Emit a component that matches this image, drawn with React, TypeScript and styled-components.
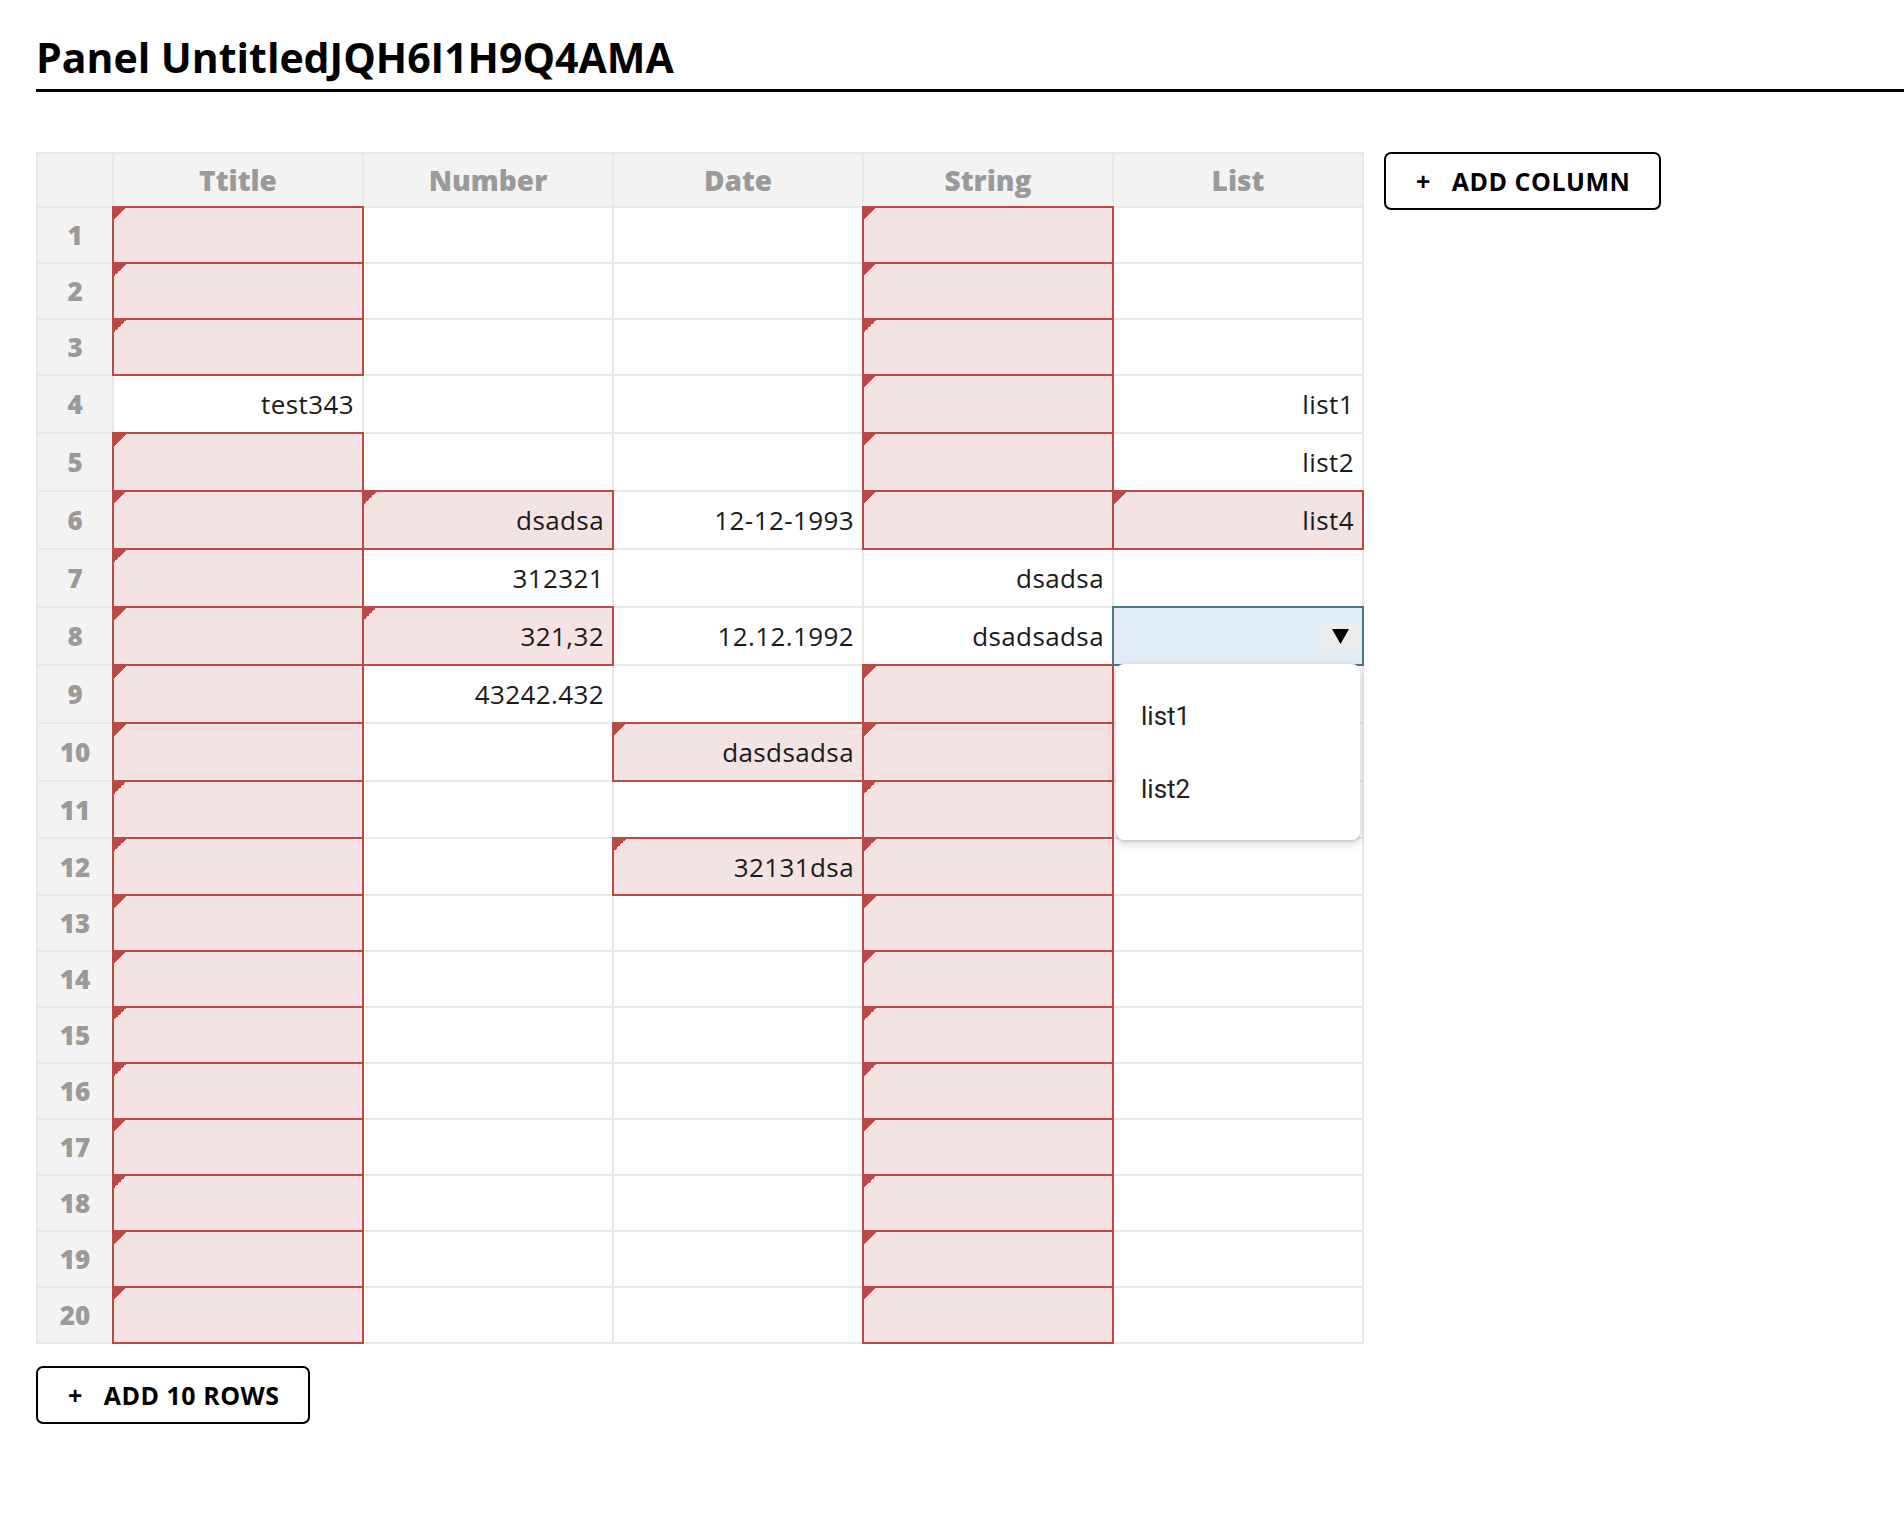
import React from "react";
import styled, { createGlobalStyle, css } from "styled-components";

const GlobalStyle = createGlobalStyle`
  html, body { margin: 0; padding: 0; background: #ffffff; }
  body { font-family: "Open Sans", "Liberation Sans", sans-serif; color: #111; }
  *, *::before, *::after { box-sizing: border-box; }
`;

const RED = "#b94a45";
const PINK = "#f4e3e3";
const LINE = "#e8e8e8";
const HEAD_BG = "#f3f3f3";

const Page = styled.div`
  padding: 29px 0 80px 36px;
`;

const Title = styled.h1`
  margin: 0;
  font-size: 41px;
  line-height: 56px;
  font-weight: 700;
  letter-spacing: 0;
  color: #000;
  padding-bottom: 4px;
  border-bottom: 3px solid #000;
`;

const Body = styled.div`
  margin-top: 60px;
  display: flex;
  align-items: flex-start;
  gap: 20px;
`;

const LeftColumn = styled.div`
  display: flex;
  flex-direction: column;
  align-items: flex-start;
  gap: 22px;
`;

const Sheet = styled.div`
  display: flex;
  flex-direction: column;
  border-top: 2px solid ${LINE};
  border-left: 2px solid ${LINE};
`;

const Row = styled.div<{ $h: number }>`
  display: flex;
  height: ${(p) => p.$h}px;
`;

const Corner = styled.div`
  width: 76px;
  height: 100%;
  background: ${HEAD_BG};
  border-right: 2px solid ${LINE};
  border-bottom: 2px solid ${LINE};
`;

const ColHead = styled.div`
  width: 250px;
  height: 100%;
  background: ${HEAD_BG};
  border-right: 2px solid ${LINE};
  border-bottom: 2px solid ${LINE};
  display: flex;
  align-items: center;
  justify-content: center;
  font-size: 28px;
  font-weight: 800;
  color: #9a9a9a;
`;

const RowHead = styled.div`
  width: 76px;
  height: 100%;
  background: ${HEAD_BG};
  border-right: 2px solid ${LINE};
  border-bottom: 2px solid ${LINE};
  display: flex;
  align-items: center;
  justify-content: center;
  font-size: 26px;
  font-weight: 800;
  color: #9a9a9a;
`;

const Cell = styled.div<{ $state?: "error" | "selected" }>`
  position: relative;
  width: 250px;
  height: 100%;
  border-right: 2px solid ${LINE};
  border-bottom: 2px solid ${LINE};
  display: flex;
  align-items: center;
  justify-content: flex-end;
  padding: 0 8px;
  font-size: 26px;
  letter-spacing: 0.4px;
  color: #1a1a1a;
  background: #fff;

  ${(p) =>
    p.$state === "error" &&
    css`
      background: ${PINK};
      &::before {
        content: "";
        position: absolute;
        top: 0;
        left: 0;
        width: 12px;
        height: 12px;
        background: linear-gradient(135deg, ${RED} 50%, transparent 50%);
      }
      &::after {
        content: "";
        position: absolute;
        inset: -2px;
        border: 2px solid ${RED};
        pointer-events: none;
        z-index: 1;
      }
    `}

  ${(p) =>
    p.$state === "selected" &&
    css`
      background: #e2ecf6;
      padding-right: 4px;
      &::after {
        content: "";
        position: absolute;
        inset: -2px;
        border: 2px solid #4b7782;
        pointer-events: none;
        z-index: 2;
      }
    `}
`;

const ArrowBox = styled.span`
  width: 36px;
  height: 26px;
  background: #ececec;
  display: flex;
  align-items: center;
  justify-content: center;
`;

const Menu = styled.div`
  position: absolute;
  top: 100%;
  left: 2px;
  width: 244px;
  background: #fff;
  border-radius: 8px;
  box-shadow: 0 4px 10px rgba(0, 0, 0, 0.16), 0 1px 3px rgba(0, 0, 0, 0.14);
  padding: 15px 0;
  z-index: 10;
`;

const MenuItem = styled.div`
  height: 73px;
  display: flex;
  align-items: center;
  padding-left: 25px;
  font-family: Roboto, "Noto Sans", sans-serif;
  font-size: 26px;
  letter-spacing: 0;
  color: #222;
`;

const ActionButton = styled.button`
  display: inline-flex;
  align-items: center;
  gap: 21px;
  height: 58px;
  padding: 0 29px 0 30px;
  border: 2px solid #000;
  border-radius: 7px;
  background: #fff;
  font-family: "Open Sans", "Liberation Sans", sans-serif;
  font-weight: 700;
  font-size: 25px;
  letter-spacing: 0.5px;
  color: #000;
  cursor: pointer;
`;

type CellData = { text?: string; error?: boolean; selected?: boolean };

const COLS = ["Ttitle", "Number", "Date", "String", "List"];
const E: CellData = { error: true };
const N: CellData = {};

const ROWS: CellData[][] = [
  [E, N, N, E, N],
  [E, N, N, E, N],
  [E, N, N, E, N],
  [{ text: "test343" }, N, N, E, { text: "list1" }],
  [E, N, N, E, { text: "list2" }],
  [E, { text: "dsadsa", error: true }, { text: "12-12-1993" }, E, { text: "list4", error: true }],
  [E, { text: "312321" }, N, { text: "dsadsa" }, N],
  [E, { text: "321,32", error: true }, { text: "12.12.1992" }, { text: "dsadsadsa" }, { selected: true }],
  [E, { text: "43242.432" }, N, E, N],
  [E, N, { text: "dasdsadsa", error: true }, E, N],
  [E, N, N, E, N],
  [E, N, { text: "32131dsa", error: true }, E, N],
  [E, N, N, E, N],
  [E, N, N, E, N],
  [E, N, N, E, N],
  [E, N, N, E, N],
  [E, N, N, E, N],
  [E, N, N, E, N],
  [E, N, N, E, N],
  [E, N, N, E, N],
];

const HEIGHTS = [56, 56, 56, 58, 58, 58, 58, 58, 58, 58, 57, 57, 56, 56, 56, 56, 56, 56, 56, 56];

const DownTriangle = () => (
  <svg width="17" height="15" viewBox="0 0 17 15">
    <polygon points="0,0 17,0 8.5,15" fill="#000" />
  </svg>
);

const Dropdown = () => (
  <>
    <ArrowBox>
      <DownTriangle />
    </ArrowBox>
    <Menu>
      <MenuItem>list1</MenuItem>
      <MenuItem>list2</MenuItem>
    </Menu>
  </>
);

export default function App() {
  return (
    <>
      <GlobalStyle />
      <Page>
        <Title>Panel UntitledJQH6I1H9Q4AMA</Title>
        <Body>
          <LeftColumn>
            <Sheet>
              <Row $h={54}>
                <Corner />
                {COLS.map((c) => (
                  <ColHead key={c}>{c}</ColHead>
                ))}
              </Row>
              {ROWS.map((row, i) => (
                <Row key={i} $h={HEIGHTS[i]}>
                  <RowHead>{i + 1}</RowHead>
                  {row.map((cell, j) => (
                    <Cell
                      key={j}
                      $state={cell.selected ? "selected" : cell.error ? "error" : undefined}
                    >
                      {cell.selected ? <Dropdown /> : cell.text}
                    </Cell>
                  ))}
                </Row>
              ))}
            </Sheet>
            <ActionButton>
              <span>+</span>
              <span>ADD 10 ROWS</span>
            </ActionButton>
          </LeftColumn>
          <ActionButton>
            <span>+</span>
            <span>ADD COLUMN</span>
          </ActionButton>
        </Body>
      </Page>
    </>
  );
}
